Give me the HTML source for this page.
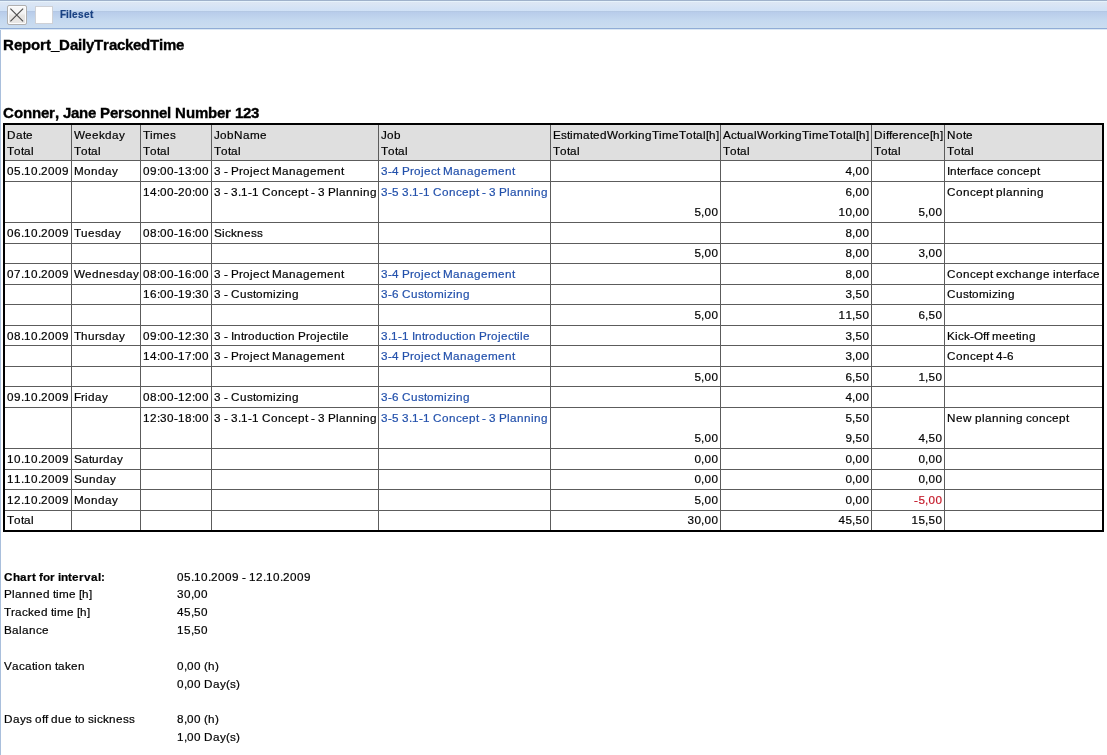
<!DOCTYPE html>
<html><head><meta charset="utf-8">
<style>
*{margin:0;padding:0;box-sizing:border-box}
html,body{width:1107px;height:755px;overflow:hidden;background:#fff;font-family:"Liberation Sans",sans-serif;color:#000}
g{display:inline-block;font-kerning:none;-webkit-text-stroke:0.2px currentColor}
#bar{position:absolute;left:0;top:0;width:1107px;height:30px;
 background:linear-gradient(to bottom,#9fb2cb 0px,#9fb2cb 1px,#e6f3fc 1px,#e6f3fc 2px,#dde7f4 2px,#d0e1f6 11px,#b4c8e4 11px,#b4c8e4 12px,#b8ccea 12px,#c4d8ef 20px,#cadcf0 27px,#cbdeee 27px,#cbdeee 28px,#90acd6 28px,#90acd6 29px,#dce8f4 29px,#dce8f4 30px)}
#xbtn{position:absolute;left:7px;top:5px;width:20px;height:20px;border:1px solid #b0b0b0;border-radius:2px;box-shadow:inset 0 0 0 1px #fcfcfc;
 background:linear-gradient(to bottom,#f8f8f8 0,#f4f4f4 40%,#e6e4e1 55%,#e9e7e5 100%)}
#xbtn svg{position:absolute;left:0;top:0}
#sq{position:absolute;left:35px;top:6px;width:18px;height:18px;border:1px solid #cfd1d6;background:#fff}
#fs{position:absolute;left:60px;top:9px;font-size:10px;font-weight:bold;color:#1a4283;white-space:nowrap}
#lb{position:absolute;left:0;top:30px;width:1px;height:725px;background:#a9bfdc}
#title{position:absolute;left:3px;top:36px;font-size:15px;font-weight:bold;color:#000;white-space:nowrap}
#pers{position:absolute;left:3px;top:104px;font-size:15px;font-weight:bold;color:#000;white-space:nowrap}
table{position:absolute;left:3px;top:123px;border-collapse:separate;border-spacing:0;border:2px solid #000;table-layout:fixed;width:1101px;font-size:11.7px}
td{border-right:1px solid #5c5c5c;border-bottom:1px solid #5c5c5c;padding:0 2px;vertical-align:top;line-height:20px;white-space:nowrap;overflow:hidden}
td .c{position:relative;top:0}
tr.h td{background:#dfdfdf;line-height:16px;padding-top:2px}
tr.h td .c{top:0}
td.r{text-align:right}
tr.s td .c{top:-1px}
td:last-child{border-right:none}
tr:last-child td{border-bottom:none}
a{color:#2250ab;text-decoration:none}
.neg{color:#c41a2a}
#sum{position:absolute;left:4px;top:568px;font-size:11.7px;line-height:18px}
#sum div{position:absolute;white-space:nowrap}
#wrap{position:absolute;left:0;top:0;width:1107px;height:755px;will-change:transform}
#title g,#pers g{-webkit-text-stroke:0.35px #000}

g[w3]{width:3px}g[w4]{width:4px}g[w5]{width:5px}g[w6]{width:6px}g[w7]{width:7px}g[w8]{width:8px}g[w9]{width:9px}g[w10]{width:10px}g[w11]{width:11px}g[w13]{width:13px}
</style></head><body><div id="wrap">
<div id="bar"></div>
<div id="xbtn"><svg width="18" height="18" viewBox="0 0 18 18"><path d="M2.4 2.7 L15.1 15.3 M15.1 2.7 L2.4 15.3" stroke="#4d4d4d" stroke-width="1.15" fill="none"/></svg></div>
<div id="sq"></div>
<div id="fs"><g w6>F</g><g w3>i</g><g w3>l</g><g w6>e</g><g w6>s</g><g w6>e</g><g w3>t</g></div>
<div id="lb"></div>
<div id="title"><g w11>R</g><g w8>e</g><g w9>p</g><g w9>o</g><g w6>r</g><g w5>t</g><g w8>_</g><g w11>D</g><g w8>a</g><g w4>i</g><g w4>l</g><g w8>y</g><g w9>T</g><g w6>r</g><g w8>a</g><g w8>c</g><g w8>k</g><g w8>e</g><g w9>d</g><g w9>T</g><g w4>i</g><g w13>m</g><g w8>e</g></div>
<div id="pers"><g w11>C</g><g w9>o</g><g w9>n</g><g w9>n</g><g w8>e</g><g w6>r</g><g w4>,</g><g w4>&nbsp;</g><g w8>J</g><g w8>a</g><g w9>n</g><g w8>e</g><g w4>&nbsp;</g><g w10>P</g><g w8>e</g><g w6>r</g><g w8>s</g><g w9>o</g><g w9>n</g><g w9>n</g><g w8>e</g><g w4>l</g><g w4>&nbsp;</g><g w11>N</g><g w9>u</g><g w13>m</g><g w9>b</g><g w8>e</g><g w6>r</g><g w4>&nbsp;</g><g w8>1</g><g w8>2</g><g w8>3</g></div>
<table>
<colgroup><col style="width:67px"><col style="width:69px"><col style="width:71px"><col style="width:167px"><col style="width:172px"><col style="width:170px"><col style="width:151px"><col style="width:73px"><col style="width:157px"></colgroup>
<tr class=h style="height:36px"><td><div class=c><g w9>D</g><g w7>a</g><g w3>t</g><g w7>e</g><br><g w7>T</g><g w7>o</g><g w3>t</g><g w7>a</g><g w3>l</g></div></td><td><div class=c><g w11>W</g><g w7>e</g><g w7>e</g><g w6>k</g><g w7>d</g><g w7>a</g><g w6>y</g><br><g w7>T</g><g w7>o</g><g w3>t</g><g w7>a</g><g w3>l</g></div></td><td><div class=c><g w7>T</g><g w3>i</g><g w10>m</g><g w7>e</g><g w6>s</g><br><g w7>T</g><g w7>o</g><g w3>t</g><g w7>a</g><g w3>l</g></div></td><td><div class=c><g w6>J</g><g w7>o</g><g w7>b</g><g w9>N</g><g w7>a</g><g w10>m</g><g w7>e</g><br><g w7>T</g><g w7>o</g><g w3>t</g><g w7>a</g><g w3>l</g></div></td><td><div class=c><g w6>J</g><g w7>o</g><g w7>b</g><br><g w7>T</g><g w7>o</g><g w3>t</g><g w7>a</g><g w3>l</g></div></td><td><div class=c><g w8>E</g><g w6>s</g><g w3>t</g><g w3>i</g><g w10>m</g><g w7>a</g><g w3>t</g><g w7>e</g><g w7>d</g><g w11>W</g><g w7>o</g><g w4>r</g><g w6>k</g><g w3>i</g><g w7>n</g><g w7>g</g><g w7>T</g><g w3>i</g><g w10>m</g><g w7>e</g><g w7>T</g><g w7>o</g><g w3>t</g><g w7>a</g><g w3>l</g><g w3>[</g><g w7>h</g><g w3>]</g><br><g w7>T</g><g w7>o</g><g w3>t</g><g w7>a</g><g w3>l</g></div></td><td><div class=c><g w8>A</g><g w6>c</g><g w3>t</g><g w7>u</g><g w7>a</g><g w3>l</g><g w11>W</g><g w7>o</g><g w4>r</g><g w6>k</g><g w3>i</g><g w7>n</g><g w7>g</g><g w7>T</g><g w3>i</g><g w10>m</g><g w7>e</g><g w7>T</g><g w7>o</g><g w3>t</g><g w7>a</g><g w3>l</g><g w3>[</g><g w7>h</g><g w3>]</g><br><g w7>T</g><g w7>o</g><g w3>t</g><g w7>a</g><g w3>l</g></div></td><td><div class=c><g w9>D</g><g w3>i</g><g w3>f</g><g w3>f</g><g w7>e</g><g w4>r</g><g w7>e</g><g w7>n</g><g w6>c</g><g w7>e</g><g w3>[</g><g w7>h</g><g w3>]</g><br><g w7>T</g><g w7>o</g><g w3>t</g><g w7>a</g><g w3>l</g></div></td><td><div class=c><g w9>N</g><g w7>o</g><g w3>t</g><g w7>e</g><br><g w7>T</g><g w7>o</g><g w3>t</g><g w7>a</g><g w3>l</g></div></td></tr>
<tr style="height:21px"><td><div class=c style="height:20px"><g w7>0</g><g w7>5</g><g w3>.</g><g w7>1</g><g w7>0</g><g w3>.</g><g w7>2</g><g w7>0</g><g w7>0</g><g w7>9</g></div></td><td><div class=c style="height:20px"><g w10>M</g><g w7>o</g><g w7>n</g><g w7>d</g><g w7>a</g><g w6>y</g></div></td><td><div class=c style="height:20px"><g w7>0</g><g w7>9</g><g w3>:</g><g w7>0</g><g w7>0</g><g w4>-</g><g w7>1</g><g w7>3</g><g w3>:</g><g w7>0</g><g w7>0</g></div></td><td><div class=c style="height:20px"><g w7>3</g><g w3>&nbsp;</g><g w4>-</g><g w3>&nbsp;</g><g w8>P</g><g w4>r</g><g w7>o</g><g w3>j</g><g w7>e</g><g w6>c</g><g w3>t</g><g w3>&nbsp;</g><g w10>M</g><g w7>a</g><g w7>n</g><g w7>a</g><g w7>g</g><g w7>e</g><g w10>m</g><g w7>e</g><g w7>n</g><g w3>t</g></div></td><td><div class=c style="height:20px"><a><g w7>3</g><g w4>-</g><g w7>4</g><g w3>&nbsp;</g><g w8>P</g><g w4>r</g><g w7>o</g><g w3>j</g><g w7>e</g><g w6>c</g><g w3>t</g><g w3>&nbsp;</g><g w10>M</g><g w7>a</g><g w7>n</g><g w7>a</g><g w7>g</g><g w7>e</g><g w10>m</g><g w7>e</g><g w7>n</g><g w3>t</g></a></div></td><td class=r><div class=c style="height:20px"></div></td><td class=r><div class=c style="height:20px"><g w7>4</g><g w3>,</g><g w7>0</g><g w7>0</g></div></td><td class=r><div class=c style="height:20px"></div></td><td><div class=c style="height:20px"><g w3>I</g><g w7>n</g><g w3>t</g><g w7>e</g><g w4>r</g><g w3>f</g><g w7>a</g><g w6>c</g><g w7>e</g><g w3>&nbsp;</g><g w6>c</g><g w7>o</g><g w7>n</g><g w6>c</g><g w7>e</g><g w7>p</g><g w3>t</g></div></td></tr>
<tr style="height:41px"><td><div class=c style="height:40px"></div></td><td><div class=c style="height:40px"></div></td><td><div class=c style="height:40px"><g w7>1</g><g w7>4</g><g w3>:</g><g w7>0</g><g w7>0</g><g w4>-</g><g w7>2</g><g w7>0</g><g w3>:</g><g w7>0</g><g w7>0</g></div></td><td><div class=c style="height:40px"><g w7>3</g><g w3>&nbsp;</g><g w4>-</g><g w3>&nbsp;</g><g w7>3</g><g w3>.</g><g w7>1</g><g w4>-</g><g w7>1</g><g w3>&nbsp;</g><g w9>C</g><g w7>o</g><g w7>n</g><g w6>c</g><g w7>e</g><g w7>p</g><g w3>t</g><g w3>&nbsp;</g><g w4>-</g><g w3>&nbsp;</g><g w7>3</g><g w3>&nbsp;</g><g w8>P</g><g w3>l</g><g w7>a</g><g w7>n</g><g w7>n</g><g w3>i</g><g w7>n</g><g w7>g</g></div></td><td><div class=c style="height:40px"><a><g w7>3</g><g w4>-</g><g w7>5</g><g w3>&nbsp;</g><g w7>3</g><g w3>.</g><g w7>1</g><g w4>-</g><g w7>1</g><g w3>&nbsp;</g><g w9>C</g><g w7>o</g><g w7>n</g><g w6>c</g><g w7>e</g><g w7>p</g><g w3>t</g><g w3>&nbsp;</g><g w4>-</g><g w3>&nbsp;</g><g w7>3</g><g w3>&nbsp;</g><g w8>P</g><g w3>l</g><g w7>a</g><g w7>n</g><g w7>n</g><g w3>i</g><g w7>n</g><g w7>g</g></a></div></td><td class=r><div class=c style="height:40px"><br><g w7>5</g><g w3>,</g><g w7>0</g><g w7>0</g></div></td><td class=r><div class=c style="height:40px"><g w7>6</g><g w3>,</g><g w7>0</g><g w7>0</g><br><g w7>1</g><g w7>0</g><g w3>,</g><g w7>0</g><g w7>0</g></div></td><td class=r><div class=c style="height:40px"><br><g w7>5</g><g w3>,</g><g w7>0</g><g w7>0</g></div></td><td><div class=c style="height:40px"><g w9>C</g><g w7>o</g><g w7>n</g><g w6>c</g><g w7>e</g><g w7>p</g><g w3>t</g><g w3>&nbsp;</g><g w7>p</g><g w3>l</g><g w7>a</g><g w7>n</g><g w7>n</g><g w3>i</g><g w7>n</g><g w7>g</g></div></td></tr>
<tr style="height:21px"><td><div class=c style="height:20px"><g w7>0</g><g w7>6</g><g w3>.</g><g w7>1</g><g w7>0</g><g w3>.</g><g w7>2</g><g w7>0</g><g w7>0</g><g w7>9</g></div></td><td><div class=c style="height:20px"><g w7>T</g><g w7>u</g><g w7>e</g><g w6>s</g><g w7>d</g><g w7>a</g><g w6>y</g></div></td><td><div class=c style="height:20px"><g w7>0</g><g w7>8</g><g w3>:</g><g w7>0</g><g w7>0</g><g w4>-</g><g w7>1</g><g w7>6</g><g w3>:</g><g w7>0</g><g w7>0</g></div></td><td><div class=c style="height:20px"><g w8>S</g><g w3>i</g><g w6>c</g><g w6>k</g><g w7>n</g><g w7>e</g><g w6>s</g><g w6>s</g></div></td><td><div class=c style="height:20px"></div></td><td class=r><div class=c style="height:20px"></div></td><td class=r><div class=c style="height:20px"><g w7>8</g><g w3>,</g><g w7>0</g><g w7>0</g></div></td><td class=r><div class=c style="height:20px"></div></td><td><div class=c style="height:20px"></div></td></tr>
<tr class=s style="height:20px"><td><div class=c style="height:19px"></div></td><td><div class=c style="height:19px"></div></td><td><div class=c style="height:19px"></div></td><td><div class=c style="height:19px"></div></td><td><div class=c style="height:19px"></div></td><td class=r><div class=c style="height:19px"><g w7>5</g><g w3>,</g><g w7>0</g><g w7>0</g></div></td><td class=r><div class=c style="height:19px"><g w7>8</g><g w3>,</g><g w7>0</g><g w7>0</g></div></td><td class=r><div class=c style="height:19px"><g w7>3</g><g w3>,</g><g w7>0</g><g w7>0</g></div></td><td><div class=c style="height:19px"></div></td></tr>
<tr style="height:21px"><td><div class=c style="height:20px"><g w7>0</g><g w7>7</g><g w3>.</g><g w7>1</g><g w7>0</g><g w3>.</g><g w7>2</g><g w7>0</g><g w7>0</g><g w7>9</g></div></td><td><div class=c style="height:20px"><g w11>W</g><g w7>e</g><g w7>d</g><g w7>n</g><g w7>e</g><g w6>s</g><g w7>d</g><g w7>a</g><g w6>y</g></div></td><td><div class=c style="height:20px"><g w7>0</g><g w7>8</g><g w3>:</g><g w7>0</g><g w7>0</g><g w4>-</g><g w7>1</g><g w7>6</g><g w3>:</g><g w7>0</g><g w7>0</g></div></td><td><div class=c style="height:20px"><g w7>3</g><g w3>&nbsp;</g><g w4>-</g><g w3>&nbsp;</g><g w8>P</g><g w4>r</g><g w7>o</g><g w3>j</g><g w7>e</g><g w6>c</g><g w3>t</g><g w3>&nbsp;</g><g w10>M</g><g w7>a</g><g w7>n</g><g w7>a</g><g w7>g</g><g w7>e</g><g w10>m</g><g w7>e</g><g w7>n</g><g w3>t</g></div></td><td><div class=c style="height:20px"><a><g w7>3</g><g w4>-</g><g w7>4</g><g w3>&nbsp;</g><g w8>P</g><g w4>r</g><g w7>o</g><g w3>j</g><g w7>e</g><g w6>c</g><g w3>t</g><g w3>&nbsp;</g><g w10>M</g><g w7>a</g><g w7>n</g><g w7>a</g><g w7>g</g><g w7>e</g><g w10>m</g><g w7>e</g><g w7>n</g><g w3>t</g></a></div></td><td class=r><div class=c style="height:20px"></div></td><td class=r><div class=c style="height:20px"><g w7>8</g><g w3>,</g><g w7>0</g><g w7>0</g></div></td><td class=r><div class=c style="height:20px"></div></td><td><div class=c style="height:20px"><g w9>C</g><g w7>o</g><g w7>n</g><g w6>c</g><g w7>e</g><g w7>p</g><g w3>t</g><g w3>&nbsp;</g><g w7>e</g><g w6>x</g><g w6>c</g><g w7>h</g><g w7>a</g><g w7>n</g><g w7>g</g><g w7>e</g><g w3>&nbsp;</g><g w3>i</g><g w7>n</g><g w3>t</g><g w7>e</g><g w4>r</g><g w3>f</g><g w7>a</g><g w6>c</g><g w7>e</g></div></td></tr>
<tr class=s style="height:20px"><td><div class=c style="height:19px"></div></td><td><div class=c style="height:19px"></div></td><td><div class=c style="height:19px"><g w7>1</g><g w7>6</g><g w3>:</g><g w7>0</g><g w7>0</g><g w4>-</g><g w7>1</g><g w7>9</g><g w3>:</g><g w7>3</g><g w7>0</g></div></td><td><div class=c style="height:19px"><g w7>3</g><g w3>&nbsp;</g><g w4>-</g><g w3>&nbsp;</g><g w9>C</g><g w7>u</g><g w6>s</g><g w3>t</g><g w7>o</g><g w10>m</g><g w3>i</g><g w6>z</g><g w3>i</g><g w7>n</g><g w7>g</g></div></td><td><div class=c style="height:19px"><a><g w7>3</g><g w4>-</g><g w7>6</g><g w3>&nbsp;</g><g w9>C</g><g w7>u</g><g w6>s</g><g w3>t</g><g w7>o</g><g w10>m</g><g w3>i</g><g w6>z</g><g w3>i</g><g w7>n</g><g w7>g</g></a></div></td><td class=r><div class=c style="height:19px"></div></td><td class=r><div class=c style="height:19px"><g w7>3</g><g w3>,</g><g w7>5</g><g w7>0</g></div></td><td class=r><div class=c style="height:19px"></div></td><td><div class=c style="height:19px"><g w9>C</g><g w7>u</g><g w6>s</g><g w3>t</g><g w7>o</g><g w10>m</g><g w3>i</g><g w6>z</g><g w3>i</g><g w7>n</g><g w7>g</g></div></td></tr>
<tr style="height:21px"><td><div class=c style="height:20px"></div></td><td><div class=c style="height:20px"></div></td><td><div class=c style="height:20px"></div></td><td><div class=c style="height:20px"></div></td><td><div class=c style="height:20px"></div></td><td class=r><div class=c style="height:20px"><g w7>5</g><g w3>,</g><g w7>0</g><g w7>0</g></div></td><td class=r><div class=c style="height:20px"><g w7>1</g><g w7>1</g><g w3>,</g><g w7>5</g><g w7>0</g></div></td><td class=r><div class=c style="height:20px"><g w7>6</g><g w3>,</g><g w7>5</g><g w7>0</g></div></td><td><div class=c style="height:20px"></div></td></tr>
<tr style="height:20px"><td><div class=c style="height:19px"><g w7>0</g><g w7>8</g><g w3>.</g><g w7>1</g><g w7>0</g><g w3>.</g><g w7>2</g><g w7>0</g><g w7>0</g><g w7>9</g></div></td><td><div class=c style="height:19px"><g w7>T</g><g w7>h</g><g w7>u</g><g w4>r</g><g w6>s</g><g w7>d</g><g w7>a</g><g w6>y</g></div></td><td><div class=c style="height:19px"><g w7>0</g><g w7>9</g><g w3>:</g><g w7>0</g><g w7>0</g><g w4>-</g><g w7>1</g><g w7>2</g><g w3>:</g><g w7>3</g><g w7>0</g></div></td><td><div class=c style="height:19px"><g w7>3</g><g w3>&nbsp;</g><g w4>-</g><g w3>&nbsp;</g><g w3>I</g><g w7>n</g><g w3>t</g><g w4>r</g><g w7>o</g><g w7>d</g><g w7>u</g><g w6>c</g><g w3>t</g><g w3>i</g><g w7>o</g><g w7>n</g><g w3>&nbsp;</g><g w8>P</g><g w4>r</g><g w7>o</g><g w3>j</g><g w7>e</g><g w6>c</g><g w3>t</g><g w3>i</g><g w3>l</g><g w7>e</g></div></td><td><div class=c style="height:19px"><a><g w7>3</g><g w3>.</g><g w7>1</g><g w4>-</g><g w7>1</g><g w3>&nbsp;</g><g w3>I</g><g w7>n</g><g w3>t</g><g w4>r</g><g w7>o</g><g w7>d</g><g w7>u</g><g w6>c</g><g w3>t</g><g w3>i</g><g w7>o</g><g w7>n</g><g w3>&nbsp;</g><g w8>P</g><g w4>r</g><g w7>o</g><g w3>j</g><g w7>e</g><g w6>c</g><g w3>t</g><g w3>i</g><g w3>l</g><g w7>e</g></a></div></td><td class=r><div class=c style="height:19px"></div></td><td class=r><div class=c style="height:19px"><g w7>3</g><g w3>,</g><g w7>5</g><g w7>0</g></div></td><td class=r><div class=c style="height:19px"></div></td><td><div class=c style="height:19px"><g w8>K</g><g w3>i</g><g w6>c</g><g w6>k</g><g w4>-</g><g w9>O</g><g w3>f</g><g w3>f</g><g w3>&nbsp;</g><g w10>m</g><g w7>e</g><g w7>e</g><g w3>t</g><g w3>i</g><g w7>n</g><g w7>g</g></div></td></tr>
<tr style="height:21px"><td><div class=c style="height:20px"></div></td><td><div class=c style="height:20px"></div></td><td><div class=c style="height:20px"><g w7>1</g><g w7>4</g><g w3>:</g><g w7>0</g><g w7>0</g><g w4>-</g><g w7>1</g><g w7>7</g><g w3>:</g><g w7>0</g><g w7>0</g></div></td><td><div class=c style="height:20px"><g w7>3</g><g w3>&nbsp;</g><g w4>-</g><g w3>&nbsp;</g><g w8>P</g><g w4>r</g><g w7>o</g><g w3>j</g><g w7>e</g><g w6>c</g><g w3>t</g><g w3>&nbsp;</g><g w10>M</g><g w7>a</g><g w7>n</g><g w7>a</g><g w7>g</g><g w7>e</g><g w10>m</g><g w7>e</g><g w7>n</g><g w3>t</g></div></td><td><div class=c style="height:20px"><a><g w7>3</g><g w4>-</g><g w7>4</g><g w3>&nbsp;</g><g w8>P</g><g w4>r</g><g w7>o</g><g w3>j</g><g w7>e</g><g w6>c</g><g w3>t</g><g w3>&nbsp;</g><g w10>M</g><g w7>a</g><g w7>n</g><g w7>a</g><g w7>g</g><g w7>e</g><g w10>m</g><g w7>e</g><g w7>n</g><g w3>t</g></a></div></td><td class=r><div class=c style="height:20px"></div></td><td class=r><div class=c style="height:20px"><g w7>3</g><g w3>,</g><g w7>0</g><g w7>0</g></div></td><td class=r><div class=c style="height:20px"></div></td><td><div class=c style="height:20px"><g w9>C</g><g w7>o</g><g w7>n</g><g w6>c</g><g w7>e</g><g w7>p</g><g w3>t</g><g w3>&nbsp;</g><g w7>4</g><g w4>-</g><g w7>6</g></div></td></tr>
<tr style="height:20px"><td><div class=c style="height:19px"></div></td><td><div class=c style="height:19px"></div></td><td><div class=c style="height:19px"></div></td><td><div class=c style="height:19px"></div></td><td><div class=c style="height:19px"></div></td><td class=r><div class=c style="height:19px"><g w7>5</g><g w3>,</g><g w7>0</g><g w7>0</g></div></td><td class=r><div class=c style="height:19px"><g w7>6</g><g w3>,</g><g w7>5</g><g w7>0</g></div></td><td class=r><div class=c style="height:19px"><g w7>1</g><g w3>,</g><g w7>5</g><g w7>0</g></div></td><td><div class=c style="height:19px"></div></td></tr>
<tr style="height:21px"><td><div class=c style="height:20px"><g w7>0</g><g w7>9</g><g w3>.</g><g w7>1</g><g w7>0</g><g w3>.</g><g w7>2</g><g w7>0</g><g w7>0</g><g w7>9</g></div></td><td><div class=c style="height:20px"><g w7>F</g><g w4>r</g><g w3>i</g><g w7>d</g><g w7>a</g><g w6>y</g></div></td><td><div class=c style="height:20px"><g w7>0</g><g w7>8</g><g w3>:</g><g w7>0</g><g w7>0</g><g w4>-</g><g w7>1</g><g w7>2</g><g w3>:</g><g w7>0</g><g w7>0</g></div></td><td><div class=c style="height:20px"><g w7>3</g><g w3>&nbsp;</g><g w4>-</g><g w3>&nbsp;</g><g w9>C</g><g w7>u</g><g w6>s</g><g w3>t</g><g w7>o</g><g w10>m</g><g w3>i</g><g w6>z</g><g w3>i</g><g w7>n</g><g w7>g</g></div></td><td><div class=c style="height:20px"><a><g w7>3</g><g w4>-</g><g w7>6</g><g w3>&nbsp;</g><g w9>C</g><g w7>u</g><g w6>s</g><g w3>t</g><g w7>o</g><g w10>m</g><g w3>i</g><g w6>z</g><g w3>i</g><g w7>n</g><g w7>g</g></a></div></td><td class=r><div class=c style="height:20px"></div></td><td class=r><div class=c style="height:20px"><g w7>4</g><g w3>,</g><g w7>0</g><g w7>0</g></div></td><td class=r><div class=c style="height:20px"></div></td><td><div class=c style="height:20px"></div></td></tr>
<tr style="height:41px"><td><div class=c style="height:40px"></div></td><td><div class=c style="height:40px"></div></td><td><div class=c style="height:40px"><g w7>1</g><g w7>2</g><g w3>:</g><g w7>3</g><g w7>0</g><g w4>-</g><g w7>1</g><g w7>8</g><g w3>:</g><g w7>0</g><g w7>0</g></div></td><td><div class=c style="height:40px"><g w7>3</g><g w3>&nbsp;</g><g w4>-</g><g w3>&nbsp;</g><g w7>3</g><g w3>.</g><g w7>1</g><g w4>-</g><g w7>1</g><g w3>&nbsp;</g><g w9>C</g><g w7>o</g><g w7>n</g><g w6>c</g><g w7>e</g><g w7>p</g><g w3>t</g><g w3>&nbsp;</g><g w4>-</g><g w3>&nbsp;</g><g w7>3</g><g w3>&nbsp;</g><g w8>P</g><g w3>l</g><g w7>a</g><g w7>n</g><g w7>n</g><g w3>i</g><g w7>n</g><g w7>g</g></div></td><td><div class=c style="height:40px"><a><g w7>3</g><g w4>-</g><g w7>5</g><g w3>&nbsp;</g><g w7>3</g><g w3>.</g><g w7>1</g><g w4>-</g><g w7>1</g><g w3>&nbsp;</g><g w9>C</g><g w7>o</g><g w7>n</g><g w6>c</g><g w7>e</g><g w7>p</g><g w3>t</g><g w3>&nbsp;</g><g w4>-</g><g w3>&nbsp;</g><g w7>3</g><g w3>&nbsp;</g><g w8>P</g><g w3>l</g><g w7>a</g><g w7>n</g><g w7>n</g><g w3>i</g><g w7>n</g><g w7>g</g></a></div></td><td class=r><div class=c style="height:40px"><br><g w7>5</g><g w3>,</g><g w7>0</g><g w7>0</g></div></td><td class=r><div class=c style="height:40px"><g w7>5</g><g w3>,</g><g w7>5</g><g w7>0</g><br><g w7>9</g><g w3>,</g><g w7>5</g><g w7>0</g></div></td><td class=r><div class=c style="height:40px"><br><g w7>4</g><g w3>,</g><g w7>5</g><g w7>0</g></div></td><td><div class=c style="height:40px"><g w9>N</g><g w7>e</g><g w9>w</g><g w3>&nbsp;</g><g w7>p</g><g w3>l</g><g w7>a</g><g w7>n</g><g w7>n</g><g w3>i</g><g w7>n</g><g w7>g</g><g w3>&nbsp;</g><g w6>c</g><g w7>o</g><g w7>n</g><g w6>c</g><g w7>e</g><g w7>p</g><g w3>t</g></div></td></tr>
<tr style="height:21px"><td><div class=c style="height:20px"><g w7>1</g><g w7>0</g><g w3>.</g><g w7>1</g><g w7>0</g><g w3>.</g><g w7>2</g><g w7>0</g><g w7>0</g><g w7>9</g></div></td><td><div class=c style="height:20px"><g w8>S</g><g w7>a</g><g w3>t</g><g w7>u</g><g w4>r</g><g w7>d</g><g w7>a</g><g w6>y</g></div></td><td><div class=c style="height:20px"></div></td><td><div class=c style="height:20px"></div></td><td><div class=c style="height:20px"></div></td><td class=r><div class=c style="height:20px"><g w7>0</g><g w3>,</g><g w7>0</g><g w7>0</g></div></td><td class=r><div class=c style="height:20px"><g w7>0</g><g w3>,</g><g w7>0</g><g w7>0</g></div></td><td class=r><div class=c style="height:20px"><g w7>0</g><g w3>,</g><g w7>0</g><g w7>0</g></div></td><td><div class=c style="height:20px"></div></td></tr>
<tr class=s style="height:20px"><td><div class=c style="height:19px"><g w7>1</g><g w7>1</g><g w3>.</g><g w7>1</g><g w7>0</g><g w3>.</g><g w7>2</g><g w7>0</g><g w7>0</g><g w7>9</g></div></td><td><div class=c style="height:19px"><g w8>S</g><g w7>u</g><g w7>n</g><g w7>d</g><g w7>a</g><g w6>y</g></div></td><td><div class=c style="height:19px"></div></td><td><div class=c style="height:19px"></div></td><td><div class=c style="height:19px"></div></td><td class=r><div class=c style="height:19px"><g w7>0</g><g w3>,</g><g w7>0</g><g w7>0</g></div></td><td class=r><div class=c style="height:19px"><g w7>0</g><g w3>,</g><g w7>0</g><g w7>0</g></div></td><td class=r><div class=c style="height:19px"><g w7>0</g><g w3>,</g><g w7>0</g><g w7>0</g></div></td><td><div class=c style="height:19px"></div></td></tr>
<tr style="height:21px"><td><div class=c style="height:20px"><g w7>1</g><g w7>2</g><g w3>.</g><g w7>1</g><g w7>0</g><g w3>.</g><g w7>2</g><g w7>0</g><g w7>0</g><g w7>9</g></div></td><td><div class=c style="height:20px"><g w10>M</g><g w7>o</g><g w7>n</g><g w7>d</g><g w7>a</g><g w6>y</g></div></td><td><div class=c style="height:20px"></div></td><td><div class=c style="height:20px"></div></td><td><div class=c style="height:20px"></div></td><td class=r><div class=c style="height:20px"><g w7>5</g><g w3>,</g><g w7>0</g><g w7>0</g></div></td><td class=r><div class=c style="height:20px"><g w7>0</g><g w3>,</g><g w7>0</g><g w7>0</g></div></td><td class=r><div class=c style="height:20px"><span class=neg><g w4>-</g><g w7>5</g><g w3>,</g><g w7>0</g><g w7>0</g></span></div></td><td><div class=c style="height:20px"></div></td></tr>
<tr class=s style="height:19px"><td><div class=c style="height:19px"><g w7>T</g><g w7>o</g><g w3>t</g><g w7>a</g><g w3>l</g></div></td><td><div class=c style="height:19px"></div></td><td><div class=c style="height:19px"></div></td><td><div class=c style="height:19px"></div></td><td><div class=c style="height:19px"></div></td><td class=r><div class=c style="height:19px"><g w7>3</g><g w7>0</g><g w3>,</g><g w7>0</g><g w7>0</g></div></td><td class=r><div class=c style="height:19px"><g w7>4</g><g w7>5</g><g w3>,</g><g w7>5</g><g w7>0</g></div></td><td class=r><div class=c style="height:19px"><g w7>1</g><g w7>5</g><g w3>,</g><g w7>5</g><g w7>0</g></div></td><td><div class=c style="height:19px"></div></td></tr>
</table>
<div id="sum">
<div style="left:0px;top:0px;font-weight:bold"><g w9>C</g><g w7>h</g><g w7>a</g><g w5>r</g><g w4>t</g><g w3>&nbsp;</g><g w4>f</g><g w7>o</g><g w5>r</g><g w3>&nbsp;</g><g w3>i</g><g w7>n</g><g w4>t</g><g w7>e</g><g w5>r</g><g w7>v</g><g w7>a</g><g w3>l</g><g w4>:</g></div>
<div style="left:173px;top:0px"><g w7>0</g><g w7>5</g><g w3>.</g><g w7>1</g><g w7>0</g><g w3>.</g><g w7>2</g><g w7>0</g><g w7>0</g><g w7>9</g><g w3>&nbsp;</g><g w4>-</g><g w3>&nbsp;</g><g w7>1</g><g w7>2</g><g w3>.</g><g w7>1</g><g w7>0</g><g w3>.</g><g w7>2</g><g w7>0</g><g w7>0</g><g w7>9</g></div>
<div style="left:0px;top:17px"><g w8>P</g><g w3>l</g><g w7>a</g><g w7>n</g><g w7>n</g><g w7>e</g><g w7>d</g><g w3>&nbsp;</g><g w3>t</g><g w3>i</g><g w10>m</g><g w7>e</g><g w3>&nbsp;</g><g w3>[</g><g w7>h</g><g w3>]</g></div>
<div style="left:173px;top:17px"><g w7>3</g><g w7>0</g><g w3>,</g><g w7>0</g><g w7>0</g></div>
<div style="left:0px;top:35px"><g w7>T</g><g w4>r</g><g w7>a</g><g w6>c</g><g w6>k</g><g w7>e</g><g w7>d</g><g w3>&nbsp;</g><g w3>t</g><g w3>i</g><g w10>m</g><g w7>e</g><g w3>&nbsp;</g><g w3>[</g><g w7>h</g><g w3>]</g></div>
<div style="left:173px;top:35px"><g w7>4</g><g w7>5</g><g w3>,</g><g w7>5</g><g w7>0</g></div>
<div style="left:0px;top:53px"><g w8>B</g><g w7>a</g><g w3>l</g><g w7>a</g><g w7>n</g><g w6>c</g><g w7>e</g></div>
<div style="left:173px;top:53px"><g w7>1</g><g w7>5</g><g w3>,</g><g w7>5</g><g w7>0</g></div>
<div style="left:0px;top:89px"><g w8>V</g><g w7>a</g><g w6>c</g><g w7>a</g><g w3>t</g><g w3>i</g><g w7>o</g><g w7>n</g><g w3>&nbsp;</g><g w3>t</g><g w7>a</g><g w6>k</g><g w7>e</g><g w7>n</g></div>
<div style="left:173px;top:89px"><g w7>0</g><g w3>,</g><g w7>0</g><g w7>0</g><g w3>&nbsp;</g><g w4>(</g><g w7>h</g><g w4>)</g></div>
<div style="left:173px;top:107px"><g w7>0</g><g w3>,</g><g w7>0</g><g w7>0</g><g w3>&nbsp;</g><g w9>D</g><g w7>a</g><g w6>y</g><g w4>(</g><g w6>s</g><g w4>)</g></div>
<div style="left:0px;top:142px"><g w9>D</g><g w7>a</g><g w6>y</g><g w6>s</g><g w3>&nbsp;</g><g w7>o</g><g w3>f</g><g w3>f</g><g w3>&nbsp;</g><g w7>d</g><g w7>u</g><g w7>e</g><g w3>&nbsp;</g><g w3>t</g><g w7>o</g><g w3>&nbsp;</g><g w6>s</g><g w3>i</g><g w6>c</g><g w6>k</g><g w7>n</g><g w7>e</g><g w6>s</g><g w6>s</g></div>
<div style="left:173px;top:142px"><g w7>8</g><g w3>,</g><g w7>0</g><g w7>0</g><g w3>&nbsp;</g><g w4>(</g><g w7>h</g><g w4>)</g></div>
<div style="left:173px;top:160px"><g w7>1</g><g w3>,</g><g w7>0</g><g w7>0</g><g w3>&nbsp;</g><g w9>D</g><g w7>a</g><g w6>y</g><g w4>(</g><g w6>s</g><g w4>)</g></div>
</div>
</div></body></html>
